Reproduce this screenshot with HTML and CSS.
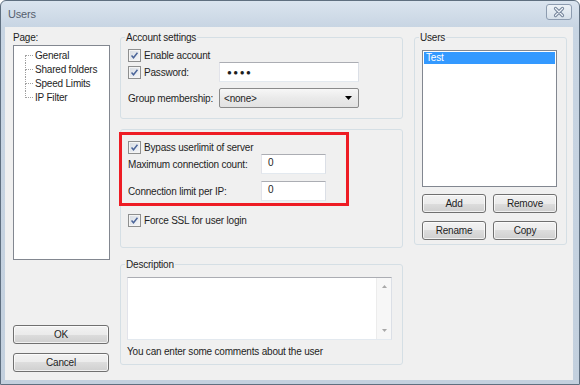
FILE: index.html
```html
<!DOCTYPE html>
<html lang="en">
<head>
  <meta charset="UTF-8">
  <title>Users</title>
  <link rel="stylesheet" href="styles.css">
</head>
<body>

<div class="window">
  <div class="titlebar">
    <span class="title">Users</span>
    <span class="close">
      <svg width="26" height="16" viewBox="0 0 26 16">
        <path d="M9.5 4.5 L16.5 11.5 M16.5 4.5 L9.5 11.5" stroke="#74849a" stroke-width="3.2" stroke-linecap="round"/>
        <path d="M9.5 4.5 L16.5 11.5 M16.5 4.5 L9.5 11.5" stroke="#eef2f7" stroke-width="1.2" stroke-linecap="round"/>
      </svg>
    </span>
  </div>

  <div class="client">
    <div class="col-page">
      <div class="label">Page:</div>
      <ul class="tree">
        <li><span class="branch"><i></i><i></i></span>General</li>
        <li><span class="branch"><i></i><i></i></span>Shared folders</li>
        <li><span class="branch"><i></i><i></i></span>Speed Limits</li>
        <li><span class="branch"><i></i><i></i></span>IP Filter</li>
      </ul>
      <div class="dlg-buttons">
        <button class="btn wide">OK</button>
        <button class="btn wide">Cancel</button>
      </div>
    </div>

    <div class="col-main">
      <fieldset class="group account">
        <legend>Account settings</legend>
        <div class="row check-row">
          <span class="check"><svg viewBox="0 0 13 13"><path d="M3 6.5 L5.3 9.2 L10 3.2"/></svg></span>
          Enable account
        </div>
        <div class="row field-row">
          <span class="field-label">
            <span class="check"><svg viewBox="0 0 13 13"><path d="M3 6.5 L5.3 9.2 L10 3.2"/></svg></span>
            Password:
          </span>
          <span class="textbox pass">&#9679;&#9679;&#9679;&#9679;</span>
        </div>
        <div class="row field-row gm">
          <span class="field-label">Group membership:</span>
          <span class="combo">
            &lt;none&gt;
            <svg width="7" height="4" viewBox="0 0 7 4"><path d="M0 0 H7 L3.5 4 Z" fill="#000"/></svg>
          </span>
        </div>
      </fieldset>

      <fieldset class="group limits">
        <div class="highlight">
          <div class="row check-row">
            <span class="check"><svg viewBox="0 0 13 13"><path d="M3 6.5 L5.3 9.2 L10 3.2"/></svg></span>
            Bypass userlimit of server
          </div>
          <div class="row field-row">
            <span class="field-label long">Maximum connection count:</span>
            <span class="textbox small">0</span>
          </div>
          <div class="row field-row per-ip">
            <span class="field-label long">Connection limit per IP:</span>
            <span class="textbox small">0</span>
          </div>
        </div>
        <div class="row check-row ssl">
          <span class="check"><svg viewBox="0 0 13 13"><path d="M3 6.5 L5.3 9.2 L10 3.2"/></svg></span>
          Force SSL for user login
        </div>
      </fieldset>

      <fieldset class="group description">
        <legend>Description</legend>
        <div class="memo">
          <div class="memo-text"></div>
          <div class="scrollbar">
            <svg width="5" height="3" viewBox="0 0 5 3"><path d="M0 3 L2.5 0 L5 3 Z" fill="#a8a8a8"/></svg>
            <svg width="5" height="3" viewBox="0 0 5 3"><path d="M0 0 L2.5 3 L5 0 Z" fill="#a8a8a8"/></svg>
          </div>
        </div>
        <div class="note">You can enter some comments about the user</div>
      </fieldset>
    </div>

    <div class="col-users">
      <fieldset class="group users">
        <legend>Users</legend>
        <div class="listbox">
          <div class="item selected">Test</div>
        </div>
        <div class="btn-row">
          <button class="btn">Add</button>
          <button class="btn">Remove</button>
        </div>
        <div class="btn-row second">
          <button class="btn">Rename</button>
          <button class="btn">Copy</button>
        </div>
      </fieldset>
    </div>
  </div>
</div>

</body>
</html>
```

FILE: styles.css
```css
* {
  box-sizing: border-box;
}
body {
  margin: 0;
  font-family: "Liberation Sans", Arial, sans-serif;
  font-size: 10px;
  letter-spacing: -0.2px;
  color: #1e1e1e;
  background: #fff;
  white-space: nowrap;
}
.window {
  width: 580px;
  height: 385px;
  display: flex;
  flex-direction: column;
  background: linear-gradient(#dae4ef, #c8d5e3 26px, #c3d0de);
  border: 1px solid #5f6f80;
  border-radius: 6px 6px 0 0;
  padding: 0 6px 4px 4px;
}
.titlebar {
  height: 26px;
  display: flex;
  align-items: center;
  justify-content: space-between;
  padding-left: 3px;
}
.title {
  font-size: 11px;
  color: #55606e;
  margin-top: -1px;
}
.close {
  width: 26px;
  height: 16px;
  margin-top: -4px;
  margin-right: 1px;
  border: 1px solid #8d9cb0;
  border-radius: 3px;
  background: linear-gradient(#edf2f7, #d6e0ea);
  display: flex;
  align-items: center;
  justify-content: center;
}
.close svg {
  display: block;
  margin: -1px;
}
.client {
  flex: 1;
  display: flex;
  background: #f0f0f0;
  padding: 4px 0 8px 8px;
}

/* left column */
.col-page {
  width: 97px;
  display: flex;
  flex-direction: column;
}
.label {
  line-height: 13px;
  height: 14px;
}
.tree {
  list-style: none;
  margin: 0;
  height: 215px;
  padding: 3px 0 0 11px;
  background: #fff;
  border: 1px solid #828790;
}
.tree li {
  display: flex;
  align-items: center;
  height: 14px;
  line-height: 14px;
}
.branch {
  width: 8px;
  height: 14px;
  margin-right: 2px;
  display: flex;
  flex-direction: column;
}
.branch i {
  display: block;
  height: 7px;
  border-left: 1px dotted #a0a0a0;
}
.branch i:first-child {
  border-bottom: 1px dotted #a0a0a0;
}
.tree li:first-child .branch i:first-child {
  border-left: none;
}
.tree li:last-child .branch i:last-child {
  border-left: none;
}
.dlg-buttons {
  margin-top: auto;
  display: flex;
  flex-direction: column;
  gap: 9px;
}

/* buttons */
.btn {
  font-family: inherit;
  font-size: 10px;
  letter-spacing: -0.2px;
  height: 19px;
  width: 64px;
  padding: 0;
  color: #1e1e1e;
  border: 1px solid #707070;
  border-radius: 3px;
  background: linear-gradient(#f2f2f2, #ebebeb 50%, #dddddd 50%, #cfcfcf);
  box-shadow: inset 0 0 0 1px rgba(255, 255, 255, 0.7);
}
.btn.wide {
  width: 96px;
}

/* middle column */
.col-main {
  width: 283px;
  margin-left: 10px;
  display: flex;
  flex-direction: column;
}
.group {
  margin: 0;
  min-width: 0;
  border: 1px solid #d5dfe5;
  border-radius: 3px;
  padding: 4px 7px 10px 7px;
}
.group legend {
  padding: 0 1px;
  margin-left: -3px;
  line-height: 13px;
}
.row {
  display: flex;
  align-items: center;
}
.check-row {
  height: 14px;
}
.check {
  width: 13px;
  height: 13px;
  margin-right: 3px;
  border: 1px solid #8e8f8f;
  background: linear-gradient(135deg, #d6dbe2, #f6f7f9);
  box-shadow: inset 0 0 0 1px #f4f4f4;
  flex: none;
}
.check svg {
  display: block;
  width: 11px;
  height: 11px;
  fill: none;
  stroke: #4a6499;
  stroke-width: 1.7;
}
.field-row {
  height: 20px;
}
.field-label {
  width: 91px;
  display: flex;
  align-items: center;
  flex: none;
}
.field-label.long {
  width: 133px;
}
.textbox {
  height: 20px;
  width: 140px;
  background: #fff;
  border: 1px solid #abadb3;
  border-color: #abadb3 #dbdfe6 #e3e9ef #e2e3ea;
  padding: 3px 6px;
  line-height: 12px;
}
.textbox.pass {
  font-size: 8px;
  letter-spacing: 1.5px;
  padding: 4px 7px 0;
}
.textbox.small {
  width: 65px;
  padding-top: 2px;
}
.gm {
  margin-top: 6px;
}
.combo {
  height: 20px;
  width: 140px;
  border: 1px solid #8a8a8a;
  border-radius: 2px;
  background: linear-gradient(#f7f7f7, #eaeaea 50%, #e2e2e2);
  display: flex;
  align-items: center;
  justify-content: space-between;
  padding: 0 6px 0 4px;
}

.limits {
  margin-top: 10px;
  padding: 2px 7px 20px 7px;
}
.highlight {
  width: 230px;
  margin-left: -9px;
  border: 3px solid #ee1c24;
  padding: 6px 0 2px 6px;
}
.highlight .check-row {
  height: 13px;
}
.per-ip {
  margin-top: 7px;
}
.ssl {
  margin-top: 8px;
  height: 13px;
}

.description {
  margin-top: 10px;
  padding: 6px 7px 6px 6px;
}
.description legend {
  margin-left: -2px;
}
.memo {
  width: 265px;
  height: 63px;
  display: flex;
  border: 1px solid #abadb3;
  border-color: #abadb3 #dbdfe6 #e3e9ef #e2e3ea;
  background: #fff;
}
.memo-text {
  flex: 1;
}
.scrollbar {
  width: 15px;
  background: #f7f7f7;
  border-left: 1px solid #ececec;
  display: flex;
  flex-direction: column;
  justify-content: space-between;
  align-items: center;
  padding: 7px 0 7px;
}
.scrollbar svg {
  display: block;
}
.note {
  margin-top: 5px;
  line-height: 13px;
}

/* right column */
.col-users {
  width: 153px;
  margin-left: 11px;
}
.users {
  padding: 6px 9px 4px 7px;
}
.listbox {
  width: 135px;
  height: 137px;
  border: 1px solid #828790;
  background: #fff;
  padding: 1px;
}
.item {
  height: 12px;
  line-height: 12px;
  padding-left: 2px;
}
.item.selected {
  background: #3399ff;
  color: #fff;
}
.btn-row {
  display: flex;
  gap: 7px;
  margin-top: 7px;
}
.btn-row.second {
  margin-top: 8px;
}
```
